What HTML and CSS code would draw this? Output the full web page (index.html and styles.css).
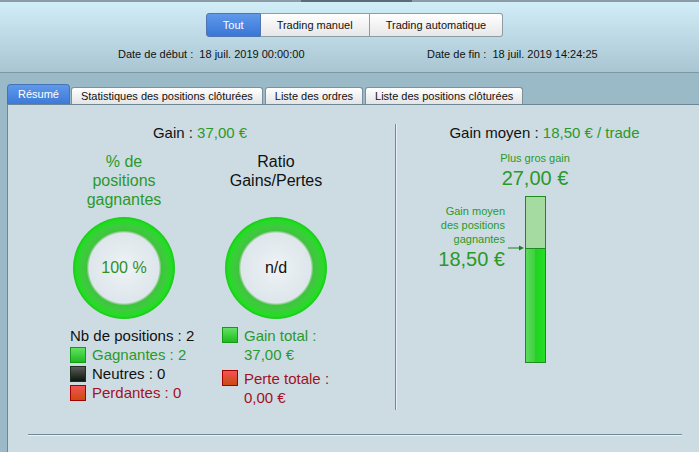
FILE: index.html
```html
<!DOCTYPE html>
<html lang="fr">
<head>
  <meta charset="UTF-8">
  <meta name="viewport" content="width=device-width, initial-scale=1.0">
  <title>Résumé du trading</title>
  <link rel="stylesheet" href="styles.css">
</head>
<body>
  <div class="scrollbar"><div class="scrollbar-thumb"></div></div>

  <header class="header">
    <div class="mode-switch">
      <button class="mode active">Tout</button>
      <button class="mode">Trading manuel</button>
      <button class="mode">Trading automatique</button>
    </div>
    <div class="dates">
      <span class="date date-start">Date de début :&nbsp; 18 juil. 2019 00:00:00</span>
      <span class="date">Date de fin :&nbsp; 18 juil. 2019 14:24:25</span>
    </div>
  </header>

  <nav class="tabs">
    <a class="tab active">Résumé</a>
    <a class="tab">Statistiques des positions clôturées</a>
    <a class="tab">Liste des ordres</a>
    <a class="tab">Liste des positions clôturées</a>
  </nav>

  <main class="panel">
    <div class="summary">
      <section class="stats">
        <div class="headline">Gain : <span class="pos">37,00 €</span></div>

        <div class="gauges">
          <div class="gauge">
            <div class="gauge-title pos">% de<br>positions<br>gagnantes</div>
            <div class="ring"><span class="pos">100 %</span></div>
            <ul class="legend">
              <li>Nb de positions : 2</li>
              <li class="pos"><span class="swatch green"></span>Gagnantes : 2</li>
              <li><span class="swatch black"></span>Neutres : 0</li>
              <li class="neg"><span class="swatch red"></span>Perdantes : 0</li>
            </ul>
          </div>

          <div class="gauge">
            <div class="gauge-title">Ratio<br>Gains/Pertes</div>
            <div class="ring"><span>n/d</span></div>
            <ul class="legend totals">
              <li class="pos"><span class="swatch green"></span><span>Gain total :<br>37,00 €</span></li>
              <li class="neg"><span class="swatch red"></span><span>Perte totale :<br>0,00 €</span></li>
            </ul>
          </div>
        </div>
      </section>

      <div class="vline"></div>

      <section class="average">
        <div class="headline">Gain moyen : <span class="pos">18,50 € / trade</span></div>

        <div class="max-gain pos">
          <div class="small">Plus gros gain</div>
          <div class="big">27,00 €</div>
        </div>

        <div class="bar-row">
          <div class="marker-label pos">
            <div class="small">Gain moyen<br>des positions<br>gagnantes</div>
            <div class="big">18,50 €</div>
          </div>
          <svg class="marker-arrow" width="20" height="10" viewBox="0 0 20 10">
            <line x1="3" y1="5" x2="17" y2="5" stroke="#1f7f1f" stroke-width="1"/>
            <polygon points="19,5 14,2.5 14,7.5" fill="#1f7f1f"/>
          </svg>
          <div class="bar">
            <div class="bar-rest"></div>
            <div class="bar-fill"></div>
          </div>
        </div>
      </section>
    </div>

    <div class="hline"></div>
  </main>
</body>
</html>
```

FILE: styles.css
```css
* {
  box-sizing: border-box;
}

body {
  margin: 0;
  width: 699px;
  height: 452px;
  overflow: hidden;
  font-family: "Liberation Sans", Arial, sans-serif;
  color: #111;
  background-color: #9bbac8;
}

.pos {
  color: #2a992a;
}

.neg {
  color: #a3101e;
}

/* thin scroll strip along the top */
.scrollbar {
  height: 2px;
  background-color: #8d9ba4;
}

.scrollbar-thumb {
  margin-left: 301px;
  width: 111px;
  height: 2px;
  background-color: #5c6b74;
}

/* header with mode switch and dates */
.header {
  height: 71px;
  background: linear-gradient(#d0edf8, #a8c5d1);
  border-bottom: 1px solid #7d97a4;
  padding-top: 11px;
}

.mode-switch {
  display: flex;
  justify-content: center;
  padding-left: 10px;
}

.mode {
  height: 24px;
  padding: 0 16px;
  font-family: inherit;
  font-size: 11px;
  color: #111;
  background: linear-gradient(#ffffff, #e7e7e7);
  border: 1px solid #8e9ca5;
  border-left: none;
  cursor: pointer;
}

.mode:first-child {
  border-left: 1px solid #5174b0;
  border-radius: 3px 0 0 3px;
}

.mode:last-child {
  border-radius: 0 3px 3px 0;
}

.mode.active {
  color: #fff;
  background: linear-gradient(#5f99ea, #3a76d6);
  border-color: #5174b0;
}

.dates {
  display: flex;
  margin-top: 10px;
  padding-left: 118px;
  font-size: 11px;
  line-height: 14px;
}

.date-start {
  width: 309px;
}

/* tab strip */
.tabs {
  display: flex;
  align-items: flex-end;
  height: 31px;
  padding-left: 7px;
}

.tab {
  height: 17px;
  margin-right: 2px;
  padding: 0 9px;
  font-size: 11px;
  line-height: 16px;
  color: #111;
  background: linear-gradient(#ffffff, #e4e4e4);
  border: 1px solid #7b929e;
  border-bottom: none;
  border-radius: 3px 3px 0 0;
}

.tab:first-child {
  margin-right: 1px;
}

.tab.active {
  height: 20px;
  padding: 0 10px;
  line-height: 19px;
  color: #fff;
  background: linear-gradient(#5f99ea, #3d79d8);
  border-color: #4673b8;
  border-radius: 4px 4px 0 0;
}

/* main panel */
.panel {
  margin-left: 7px;
  height: 348px;
  background-color: #cddce3;
  border-top: 1px solid #6d8794;
  border-left: 1px solid #6d8794;
}

.summary {
  display: flex;
  padding-top: 19px;
}

.headline {
  font-size: 15px;
  line-height: 18px;
  text-align: center;
}

.stats {
  width: 387px;
  padding-right: 3px;
}

.gauges {
  display: flex;
  justify-content: center;
  margin-top: 10px;
}

.gauge {
  width: 152px;
}

.gauge-title {
  height: 57px;
  font-size: 16px;
  line-height: 19px;
  text-align: center;
}

.ring {
  display: flex;
  align-items: center;
  justify-content: center;
  width: 102px;
  height: 102px;
  margin: 8px auto 0;
  border-radius: 50%;
  font-size: 16px;
  background: radial-gradient(circle closest-side,
    #eef3f6 0px, #dde6eb 35px, #9fd39f 36px, #3fc43f 37.5px,
    #3ccc3c 43px, #22dd22 48px, #1bc81b 51px);
}

.ring .pos {
  color: #2f8f1f;
}

.legend {
  list-style: none;
  margin: 7px 0 0;
  padding: 0 0 0 22px;
  font-size: 15px;
  line-height: 19px;
}

.legend li {
  display: flex;
  align-items: center;
}

.totals li {
  align-items: flex-start;
  margin-bottom: 5px;
}

.totals .swatch {
  margin-top: 1px;
}

.swatch {
  flex: none;
  width: 16px;
  height: 16px;
  margin-right: 6px;
  border: 1px solid;
}

.swatch.green {
  border-color: #169916;
  background: linear-gradient(#62e262, #1fbb1f);
}

.swatch.black {
  border-color: #1d2f1d;
  background: linear-gradient(#5a5a5a, #0c180c);
}

.swatch.red {
  border-color: #a30000;
  background: linear-gradient(#f25454, #cc4a12);
}

/* etched separators */
.vline {
  align-self: flex-start;
  width: 2px;
  height: 286px;
  border-left: 1px solid #6f8b98;
  border-right: 1px solid #e7f0f4;
}

.hline {
  width: 654px;
  height: 2px;
  margin: 22px 0 0 20px;
  border-top: 1px solid #6f8b98;
  border-bottom: 1px solid #e7f0f4;
}

/* average gain column */
.average {
  flex: 1;
  padding-right: 7px;
}

.small {
  font-size: 11px;
  line-height: 14px;
}

.big {
  font-size: 20px;
  line-height: 22px;
}

.max-gain {
  width: 100px;
  margin: 9px 0 0 88px;
  text-align: center;
}

.max-gain .big {
  margin-top: 2px;
}

.bar-row {
  display: flex;
  align-items: flex-start;
  margin: 7px 0 0 28px;
}

.marker-label {
  width: 80px;
  padding-top: 8px;
  text-align: right;
}

.marker-label .big {
  margin-top: 2px;
}

.marker-arrow {
  margin-top: 47px;
}

.bar {
  display: flex;
  flex-direction: column;
  width: 21px;
  height: 167px;
  border: 1px solid #1c8c1c;
}

.bar-rest {
  height: 52px;
  background-color: #a5dba1;
  border-bottom: 1px solid #1c8c1c;
}

.bar-fill {
  flex: 1;
  background: linear-gradient(to right, #5cdc5c 0%, #3ccf3c 50%, #1fd31f 50%, #25de25 100%);
}
```
